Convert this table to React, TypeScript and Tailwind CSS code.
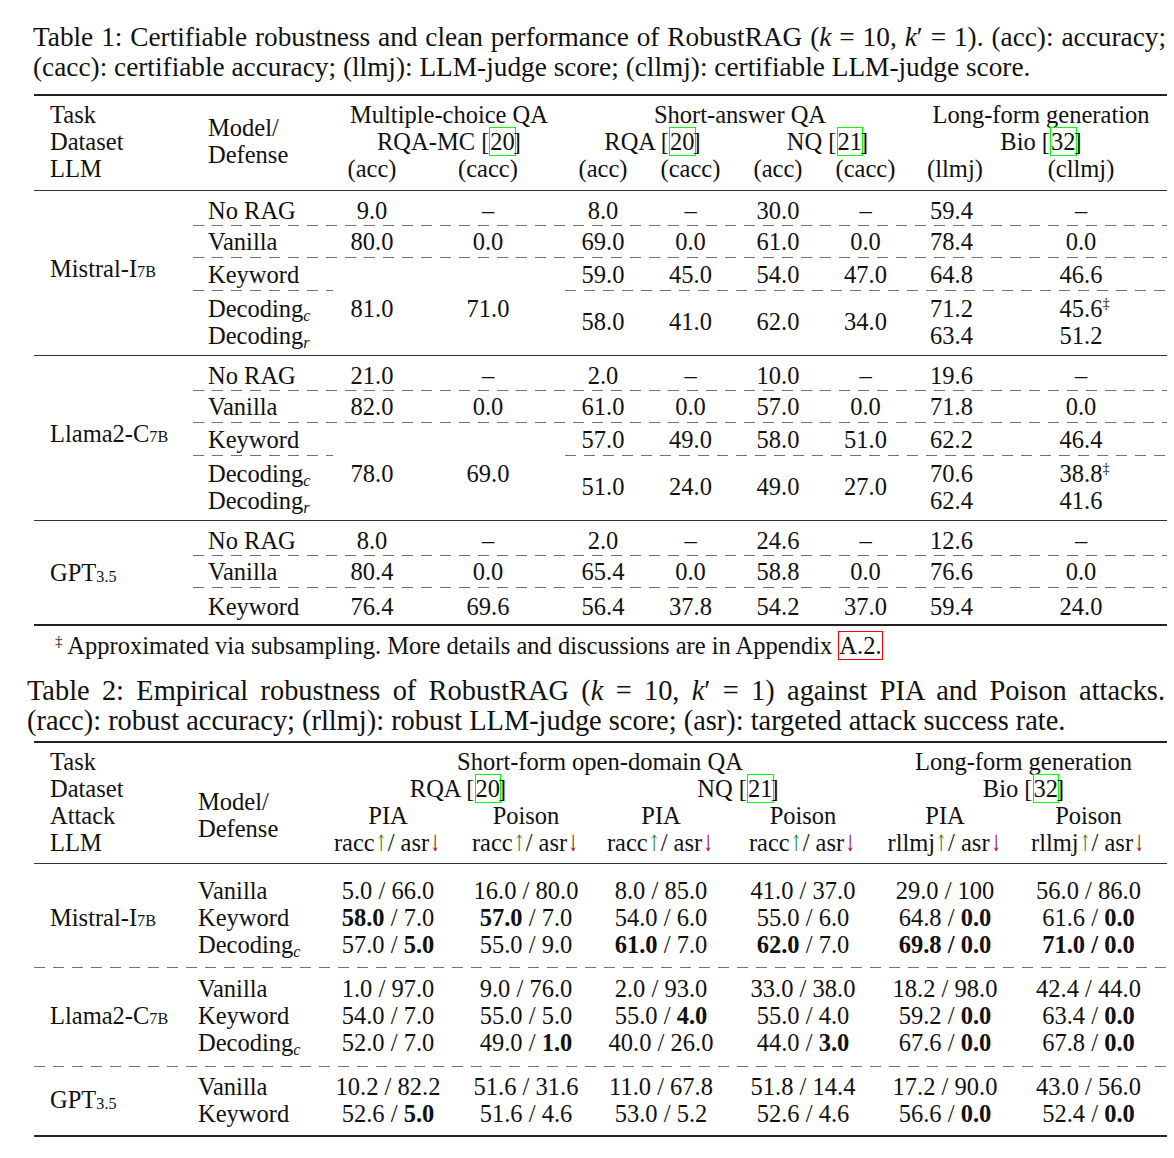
import React from "react";

// column templates (px) measured off the page
const T1_COLS = "grid grid-cols-[140px_78px_154px_76px_99px_76px_99px_80px_172px]";
const T1_HEAD = "grid grid-cols-[159px_140px_78px_154px_76px_99px_76px_99px_80px_172px] grid-rows-[27px_27px_27px]";
const T2_COLS = "grid grid-cols-[137px_136px_140px_130px_154px_130px_157px]";
const T2_HEAD = "grid grid-cols-[149px_137px_136px_140px_130px_154px_130px_157px] grid-rows-[27px_27px_27px_27px]";

const dash =
  "h-px bg-[linear-gradient(to_right,#707070_0_11px,transparent_11px_19px)] bg-[length:19px_1px] bg-repeat-x";

function Cite({ n }: { n: string }) {
  return (
    <>
      [<span className="border border-[#00ff00] -mr-[3px]">{n}</span>]
    </>
  );
}

function Sub({ children, italic }: { children: React.ReactNode; italic?: boolean }) {
  return <sub className={`text-[0.66em] ${italic ? "italic" : ""}`}>{children}</sub>;
}

// tall thin math arrows (DejaVu has taller arrow glyphs than Liberation)
const Up = () => (
  <span className="inline-block font-['DejaVu_Serif',serif] text-[0.92em] leading-none text-[#2f8a2f] scale-x-[0.62] -mx-[3px]">↑</span>
);
const Down = () => (
  <span className="inline-block font-['DejaVu_Serif',serif] text-[0.92em] leading-none text-[#a01818] scale-x-[0.62] -mx-[3px]">↓</span>
);

function Dag({ v }: { v: string }) {
  return (
    <span className="relative">
      {v}
      <span className="absolute left-full top-[1px] text-[0.6em] leading-none">‡</span>
    </span>
  );
}

// ---------- Table 1 ----------

type Dec = { mc: string[]; short: string[]; llmj: string[]; cllmj: string[] };

type Group1 = {
  label: React.ReactNode;
  noRag: string[];
  vanilla: string[];
  keyword: string[];
  dec?: Dec;
};

const t1: Group1[] = [
  {
    label: <>Mistral-I<Sub>7B</Sub></>,
    noRag: ["9.0", "–", "8.0", "–", "30.0", "–", "59.4", "–"],
    vanilla: ["80.0", "0.0", "69.0", "0.0", "61.0", "0.0", "78.4", "0.0"],
    keyword: ["", "", "59.0", "45.0", "54.0", "47.0", "64.8", "46.6"],
    dec: { mc: ["81.0", "71.0"], short: ["58.0", "41.0", "62.0", "34.0"], llmj: ["71.2", "63.4"], cllmj: ["45.6", "51.2"] },
  },
  {
    label: <>Llama2-C<Sub>7B</Sub></>,
    noRag: ["21.0", "–", "2.0", "–", "10.0", "–", "19.6", "–"],
    vanilla: ["82.0", "0.0", "61.0", "0.0", "57.0", "0.0", "71.8", "0.0"],
    keyword: ["", "", "57.0", "49.0", "58.0", "51.0", "62.2", "46.4"],
    dec: { mc: ["78.0", "69.0"], short: ["51.0", "24.0", "49.0", "27.0"], llmj: ["70.6", "62.4"], cllmj: ["38.8", "41.6"] },
  },
  {
    label: <>GPT<Sub>3.5</Sub></>,
    noRag: ["8.0", "–", "2.0", "–", "24.6", "–", "12.6", "–"],
    vanilla: ["80.4", "0.0", "65.4", "0.0", "58.8", "0.0", "76.6", "0.0"],
    keyword: ["76.4", "69.6", "56.4", "37.8", "54.2", "37.0", "59.4", "24.0"],
  },
];

function T1Row({ name, vals, h, pt }: { name: React.ReactNode; vals: string[]; h: string; pt?: string }) {
  return (
    <div className={`${T1_COLS} ${h} ${pt ?? ""} items-center`}>
      <div className="pl-[15px]">{name}</div>
      {vals.map((v, i) => (
        <div key={i} className={i === 6 ? "pl-[15px]" : "text-center"}>
          {v}
        </div>
      ))}
    </div>
  );
}

function T1Group({ g, last }: { g: Group1; last: boolean }) {
  return (
    <div className="flex">
      <div className={`w-[159px] flex items-center pl-[16px] ${last ? "" : "pb-[10px]"}`}>{g.label}</div>
      <div className="w-[974px]">
        <T1Row name="No RAG" vals={g.noRag} h="h-[34px]" pt="pt-[5px]" />
        <div className={dash} />
        <T1Row name="Vanilla" vals={g.vanilla} h="h-[31px]" />
        <div className={dash} />
        {g.dec ? (
          <>
            <T1Row name="Keyword" vals={g.keyword} h="h-[32px]" />
            <div className={T1_COLS}>
              <div className={dash} />
              <div className="col-span-2" />
              <div className={`col-span-6 ${dash}`} />
            </div>
            <div className={`${T1_COLS} h-[64px] pt-[3.5px] items-start`}>
              <div className="pl-[15px]">
                <div>Decoding<Sub italic>c</Sub></div>
                <div>Decoding<Sub italic>r</Sub></div>
              </div>
              {g.dec.mc.map((v, i) => (
                <div key={i} className="text-center">{v}</div>
              ))}
              {g.dec.short.map((v, i) => (
                <div key={i} className="h-[54px] flex items-center justify-center">{v}</div>
              ))}
              <div className="pl-[15px]">
                <div>{g.dec.llmj[0]}</div>
                <div>{g.dec.llmj[1]}</div>
              </div>
              <div className="flex justify-center">
                <div>
                  <div><Dag v={g.dec.cllmj[0]} /></div>
                  <div>{g.dec.cllmj[1]}</div>
                </div>
              </div>
            </div>
          </>
        ) : (
          <T1Row name="Keyword" vals={g.keyword} h="h-[36px]" pt="pt-[1px]" />
        )}
      </div>
    </div>
  );
}

function Table1() {
  return (
    <div>
      <div className="h-[2px] bg-[#222]" />
      <div className={`${T1_HEAD} h-[94px] pt-[4.5px]`}>
        <div className="row-span-3 pl-[16px]">
          <div>Task</div>
          <div>Dataset</div>
          <div>LLM</div>
        </div>
        <div className="row-span-3 pl-[15px] flex flex-col justify-center">
          <div>Model/</div>
          <div>Defense</div>
        </div>
        <div className="col-span-2 text-center">Multiple-choice QA</div>
        <div className="col-span-4 text-center">Short-answer QA</div>
        <div className="col-span-2 text-center">Long-form generation</div>
        <div className="col-span-2 text-center">RQA-MC <Cite n="20" /></div>
        <div className="col-span-2 text-center">RQA <Cite n="20" /></div>
        <div className="col-span-2 text-center">NQ <Cite n="21" /></div>
        <div className="col-span-2 text-center">Bio <Cite n="32" /></div>
        <div className="text-center">(acc)</div>
        <div className="text-center">(cacc)</div>
        <div className="text-center">(acc)</div>
        <div className="text-center">(cacc)</div>
        <div className="text-center">(acc)</div>
        <div className="text-center">(cacc)</div>
        <div className="text-center">(llmj)</div>
        <div className="text-center">(cllmj)</div>
      </div>
      <div className="h-px bg-[#333]" />
      {t1.map((g, i) => (
        <React.Fragment key={i}>
          <T1Group g={g} last={i === t1.length - 1} />
          {i < t1.length - 1 ? <div className="h-px bg-[#333]" /> : null}
        </React.Fragment>
      ))}
      <div className="h-[2px] bg-[#222]" />
    </div>
  );
}

// ---------- Table 2 ----------

// each cell: [left, right, boldLeft, boldRight]
type Cell = [string, string, boolean?, boolean?];

type Group2 = { label: React.ReactNode; h: string; pt: string; rows: { name: React.ReactNode; cells: Cell[] }[] };

const decC = <>Decoding<Sub italic>c</Sub></>;

const t2: Group2[] = [
  {
    label: <>Mistral-I<Sub>7B</Sub></>,
    h: "h-[103px]",
    pt: "pt-[12.5px]",
    rows: [
      { name: "Vanilla", cells: [["5.0", "66.0"], ["16.0", "80.0"], ["8.0", "85.0"], ["41.0", "37.0"], ["29.0", "100"], ["56.0", "86.0"]] },
      { name: "Keyword", cells: [["58.0", "7.0", true], ["57.0", "7.0", true], ["54.0", "6.0"], ["55.0", "6.0"], ["64.8", "0.0", false, true], ["61.6", "0.0", false, true]] },
      { name: decC, cells: [["57.0", "5.0", false, true], ["55.0", "9.0"], ["61.0", "7.0", true], ["62.0", "7.0", true], ["69.8", "0.0", true, true], ["71.0", "0.0", true, true]] },
    ],
  },
  {
    label: <>Llama2-C<Sub>7B</Sub></>,
    h: "h-[98px]",
    pt: "pt-[6.5px]",
    rows: [
      { name: "Vanilla", cells: [["1.0", "97.0"], ["9.0", "76.0"], ["2.0", "93.0"], ["33.0", "38.0"], ["18.2", "98.0"], ["42.4", "44.0"]] },
      { name: "Keyword", cells: [["54.0", "7.0"], ["55.0", "5.0"], ["55.0", "4.0", false, true], ["55.0", "4.0"], ["59.2", "0.0", false, true], ["63.4", "0.0", false, true]] },
      { name: decC, cells: [["52.0", "7.0"], ["49.0", "1.0", false, true], ["40.0", "26.0"], ["44.0", "3.0", false, true], ["67.6", "0.0", false, true], ["67.8", "0.0", false, true]] },
    ],
  },
  {
    label: <>GPT<Sub>3.5</Sub></>,
    h: "h-[68px]",
    pt: "pt-[5.5px]",
    rows: [
      { name: "Vanilla", cells: [["10.2", "82.2"], ["51.6", "31.6"], ["11.0", "67.8"], ["51.8", "14.4"], ["17.2", "90.0"], ["43.0", "56.0"]] },
      { name: "Keyword", cells: [["52.6", "5.0", false, true], ["51.6", "4.6"], ["53.0", "5.2"], ["52.6", "4.6"], ["56.6", "0.0", false, true], ["52.4", "0.0", false, true]] },
    ],
  },
];

function Pair({ c }: { c: Cell }) {
  const [a, b, ba, bb] = c;
  const both = ba && bb;
  return (
    <div className="text-center">
      {both ? (
        <span className="font-bold">{a} / {b}</span>
      ) : (
        <>
          <span className={ba ? "font-bold" : ""}>{a}</span> / <span className={bb ? "font-bold" : ""}>{b}</span>
        </>
      )}
    </div>
  );
}

function Table2() {
  return (
    <div>
      <div className="h-[2px] bg-[#222]" />
      <div className={`${T2_HEAD} h-[120px] pt-[4.5px]`}>
        <div className="row-span-4 pl-[16px]">
          <div>Task</div>
          <div>Dataset</div>
          <div>Attack</div>
          <div>LLM</div>
        </div>
        <div className="row-span-4 pl-[15px] pt-[40px]">
          <div>Model/</div>
          <div>Defense</div>
        </div>
        <div className="col-span-4 text-center">Short-form open-domain QA</div>
        <div className="col-span-2 text-center">Long-form generation</div>
        <div className="col-span-2 text-center">RQA <Cite n="20" /></div>
        <div className="col-span-2 text-center">NQ <Cite n="21" /></div>
        <div className="col-span-2 text-center">Bio <Cite n="32" /></div>
        {["PIA", "Poison", "PIA", "Poison", "PIA", "Poison"].map((t, i) => (
          <div key={i} className="text-center">{t}</div>
        ))}
        {["racc", "racc", "racc", "racc", "rllmj", "rllmj"].map((t, i) => (
          <div key={i} className="text-center whitespace-nowrap">
            {t}
            <Up />/ asr
            <Down />
          </div>
        ))}
      </div>
      <div className="h-px bg-[#333]" />
      {t2.map((g, gi) => (
        <React.Fragment key={gi}>
          <div className={`flex ${g.h} ${g.pt}`}>
            <div className="w-[149px] pl-[16px] self-start flex items-center" style={{ height: g.rows.length * 27 }}>
              {g.label}
            </div>
            <div className="w-[984px]">
              {g.rows.map((r, ri) => (
                <div key={ri} className={`${T2_COLS} h-[27px]`}>
                  <div className="pl-[15px]">{r.name}</div>
                  {r.cells.map((c, ci) => (
                    <Pair key={ci} c={c} />
                  ))}
                </div>
              ))}
            </div>
          </div>
          {gi < t2.length - 1 ? <div className={dash} /> : null}
        </React.Fragment>
      ))}
      <div className="h-[2px] bg-[#222]" />
    </div>
  );
}

export default function App() {
  return (
    <div className="w-[1174px] h-[1158px] bg-white text-[#111] font-['Liberation_Serif','Times_New_Roman',serif] text-[24.5px] leading-[27px] overflow-hidden">
      <div className="ml-[34px] w-[1133px]">
        <div className="pt-[22px] -ml-px w-[1133px] text-[27.3px] leading-[30px]">
          <div className="text-justify [text-align-last:justify]">
            Table 1: Certifiable robustness and clean performance of RobustRAG (<i>k</i> = 10, <i>k</i>′ = 1). (acc): accuracy;
          </div>
          <div>(cacc): certifiable accuracy; (llmj): LLM-judge score; (cllmj): certifiable LLM-judge score.</div>
        </div>
        <div className="mt-[12px]">
          <Table1 />
        </div>
        <div className="mt-[5.5px] pl-[21px]">
          <sup className="text-[0.62em]">‡</sup> Approximated via subsampling. More details and discussions are in Appendix{" "}
          <span className="border border-[#ff0000]">A.2.</span>
        </div>
        <div className="mt-[17.5px] -ml-[7px] w-[1138px] text-[28.4px] leading-[30px]">
          <div className="text-justify [text-align-last:justify]">
            Table 2: Empirical robustness of RobustRAG (<i>k</i> = 10, <i>k</i>′ = 1) against PIA and Poison attacks.
          </div>
          <div>(racc): robust accuracy; (rllmj): robust LLM-judge score; (asr): targeted attack success rate.</div>
        </div>
        <div className="mt-[5px]">
          <Table2 />
        </div>
      </div>
    </div>
  );
}
